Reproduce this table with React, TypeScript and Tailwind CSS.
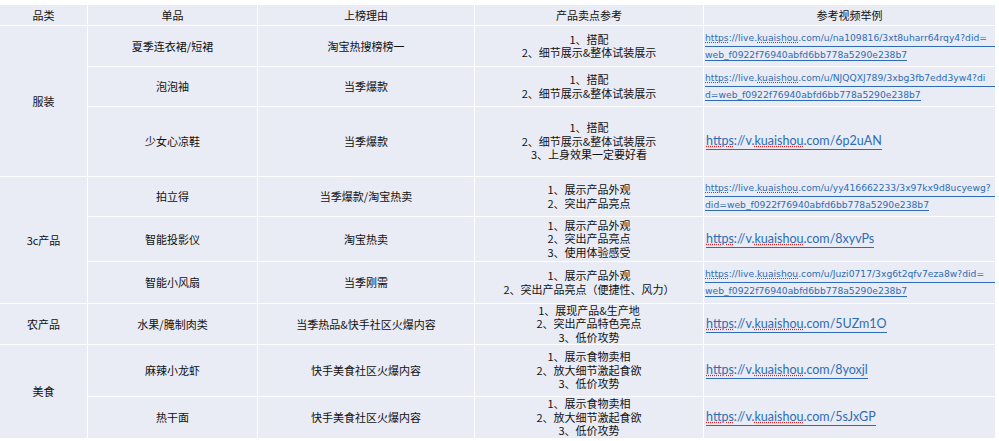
const CELL = "flex items-center justify-center bg-[#e9ebf5] text-center";

type Row = {
  item: string;
  reason: string;
  points: string[];
  link: { long?: [string, string]; short?: string };
};

const GROUPS: { name: string; rows: Row[] }[] = [
  {
    name: "服装",
    rows: [
      {
        item: "夏季连衣裙/短裙",
        reason: "淘宝热搜榜榜一",
        points: ["1、搭配", "2、细节展示&整体试装展示"],
        link: {
          long: ["https://live.kuaishou.com/u/na109816/3xt8uharr64rqy4?did=", "web_f0922f76940abfd6bb778a5290e238b7"],
        },
      },
      {
        item: "泡泡袖",
        reason: "当季爆款",
        points: ["1、搭配", "2、细节展示&整体试装展示"],
        link: {
          long: ["https://live.kuaishou.com/u/NJQQXJ789/3xbg3fb7edd3yw4?di", "d=web_f0922f76940abfd6bb778a5290e238b7"],
        },
      },
      {
        item: "少女心凉鞋",
        reason: "当季爆款",
        points: ["1、搭配", "2、细节展示&整体试装展示", "3、上身效果一定要好看"],
        link: { short: "6p2uAN" },
      },
    ],
  },
  {
    name: "3c产品",
    rows: [
      {
        item: "拍立得",
        reason: "当季爆款/淘宝热卖",
        points: ["1、展示产品外观", "2、突出产品亮点"],
        link: {
          long: ["https://live.kuaishou.com/u/yy416662233/3x97kx9d8ucyewg?", "did=web_f0922f76940abfd6bb778a5290e238b7"],
        },
      },
      {
        item: "智能投影仪",
        reason: "淘宝热卖",
        points: ["1、展示产品外观", "2、突出产品亮点", "3、使用体验感受"],
        link: { short: "8xyvPs" },
      },
      {
        item: "智能小风扇",
        reason: "当季刚需",
        points: ["1、展示产品外观", "2、突出产品亮点（便捷性、风力）"],
        link: {
          long: ["https://live.kuaishou.com/u/Juzi0717/3xg6t2qfv7eza8w?did=", "web_f0922f76940abfd6bb778a5290e238b7"],
        },
      },
    ],
  },
  {
    name: "农产品",
    rows: [
      {
        item: "水果/腌制肉类",
        reason: "当季热品&快手社区火爆内容",
        points: ["1、展现产品&生产地", "2、突出产品特色亮点", "3、低价攻势"],
        link: { short: "5UZm1O" },
      },
    ],
  },
  {
    name: "美食",
    rows: [
      {
        item: "麻辣小龙虾",
        reason: "快手美食社区火爆内容",
        points: ["1、展示食物卖相", "2、放大细节激起食欲", "3、低价攻势"],
        link: { short: "8yoxjl" },
      },
      {
        item: "热干面",
        reason: "快手美食社区火爆内容",
        points: ["1、展示食物卖相", "2、放大细节激起食欲", "3、低价攻势"],
        link: { short: "5sJxGP" },
      },
    ],
  },
];

// marks the words a spell checker would flag
function Flagged({ text }: { text: string }) {
  const parts = text.split(/(https|kuaishou)/);
  return (
    <>
      {parts.map((p, i) =>
        p === "https" || p === "kuaishou" ? (
          <span key={i} className="underline decoration-dotted decoration-[#e02020] underline-offset-[1px]">
            {p}
          </span>
        ) : (
          <span key={i}>{p}</span>
        )
      )}
    </>
  );
}

function LinkCell({ link }: { link: Row["link"] }) {
  if (link.short) {
    return (
      <div className="flex items-center bg-[#e9ebf5] pl-[2px]">
        <span className="border-b border-[#2e6db4] font-['Lato',sans-serif] text-[12.5px] leading-[16px] text-[#2e6db4]">
          <Flagged text={`https://v.kuaishou.com/${link.short}`} />
        </span>
      </div>
    );
  }
  const [a, b] = link.long!;
  return (
    <div className="flex flex-col justify-center bg-[#e9ebf5] pl-px font-['DejaVu_Sans',sans-serif] text-[9.2px] leading-[16px] text-[#2e6db4]">
      <div className="border-b border-[#2e6db4] whitespace-nowrap">
        <Flagged text={a} />
      </div>
      <div>
        <span className="border-b border-[#2e6db4] whitespace-nowrap">
          <Flagged text={b} />
        </span>
      </div>
    </div>
  );
}

export default function App() {
  let rowIndex = 2;
  return (
    <div className="min-h-[441px] w-[999px] bg-white pt-[5px] font-['Noto_Sans_CJK_SC','Noto_Sans',sans-serif] text-[11px] text-[#111]">
      <div className="grid w-[995px] grid-cols-[87px_169px_216px_228px_291px] grid-rows-[20px_40px_39px_69px_39px_44px_41px_40px_51px_41px] gap-px bg-white">
        {["品类", "单品", "上榜理由", "产品卖点参考", "参考视频举例"].map((h) => (
          <div key={h} className={CELL}>
            {h}
          </div>
        ))}
        {GROUPS.map((g) => {
          const start = rowIndex;
          rowIndex += g.rows.length;
          return [
            <div
              key={g.name}
              className={CELL}
              style={{ gridColumn: 1, gridRow: `${start} / span ${g.rows.length}` }}
            >
              {g.name}
            </div>,
            ...g.rows.flatMap((r, i) => [
              <div key={r.item + "a"} className={CELL} style={{ gridColumn: 2, gridRow: start + i }}>
                {r.item}
              </div>,
              <div key={r.item + "b"} className={CELL} style={{ gridColumn: 3, gridRow: start + i }}>
                {r.reason}
              </div>,
              <div
                key={r.item + "c"}
                className={`${CELL} flex-col leading-[13.5px]`}
                style={{ gridColumn: 4, gridRow: start + i }}
              >
                {r.points.map((p) => (
                  <div key={p}>{p}</div>
                ))}
              </div>,
              <div key={r.item + "d"} className="grid" style={{ gridColumn: 5, gridRow: start + i }}>
                <LinkCell link={r.link} />
              </div>,
            ]),
          ];
        })}
      </div>
    </div>
  );
}
